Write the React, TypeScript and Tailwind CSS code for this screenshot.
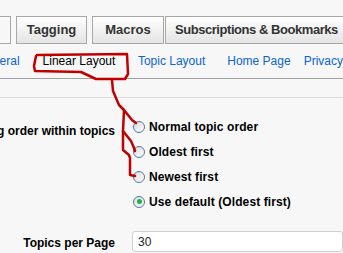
import React from "react";

const font = { fontFamily: '"Liberation Sans", Arial, sans-serif' };

function Radio({ checked }: { checked?: boolean }) {
  return (
    <span className="relative flex h-[12px] w-[12px] shrink-0 items-center justify-center rounded-full border border-[#4f7aa8] bg-gradient-to-br from-[#d9d9d9] to-[#ffffff]">
      {checked && <span className="h-[5px] w-[5px] rounded-full bg-[#22b14c]" />}
    </span>
  );
}

function Tab({ label, className = "" }: { label: string; className?: string }) {
  return (
    <div
      className={`flex h-[28px] items-center justify-center border border-[#a8a8a8] bg-gradient-to-b from-[#ffffff] to-[#e4e4e4] text-[13px] font-bold text-[#333333] ${className}`}
    >
      {label}
    </div>
  );
}

export default function App() {
  return (
    <div className="relative h-[253px] w-[343px] overflow-hidden bg-[#f7f7f7]" style={font}>
      {/* Tab row */}
      <div className="flex h-[44px] items-end whitespace-nowrap">
        <div className="ml-[-2px] h-[28px] w-[13px] shrink-0 border border-[#a8a8a8] bg-[#f7f7f7]" />
        <Tab label="Tagging" className="ml-[5px] w-[71px] shrink-0" />
        <Tab label="Macros" className="ml-[5px] w-[72px] shrink-0" />
        <Tab
          label="Subscriptions & Bookmarks"
          className="ml-[1px] w-[190px] shrink-0 justify-start pl-[9px] tracking-[-0.45px]"
        />
      </div>

      {/* Sub tabs */}
      <div className="flex h-[35px] items-center whitespace-nowrap border-b border-[#a0a0a0] pb-[1px] text-[12px] text-[#0a64d6]">
        <span className="ml-[-33px] w-[53px] text-right">General</span>
        <span className="ml-[23px] w-[96px] text-black">Linear Layout</span>
        <span className="w-[90px]">Topic Layout</span>
        <span className="w-[77px]">Home Page</span>
        <span>Privacy</span>
      </div>

      <div className="h-[19px] border-b border-[#dddddd]" />

      {/* Content */}
      <div className="grid grid-cols-[115px_1fr] gap-x-[18px] pt-[16px] text-[12px] font-bold text-black">
        <div className="flex h-[25px] items-center justify-end overflow-visible whitespace-nowrap pt-[8px]">
          Sorting order within topics
        </div>
        <div className="flex flex-col">
          {[
            "Normal topic order",
            "Oldest first",
            "Newest first",
            "Use default (Oldest first)",
          ].map((t, i) => (
            <div key={t} className="flex h-[25px] items-center gap-[4px] whitespace-nowrap">
              <Radio checked={i === 3} />
              <span className="tracking-[0.1px]">{t}</span>
            </div>
          ))}
        </div>

        <div className="mt-[18px] flex h-[20px] items-center justify-end whitespace-nowrap pt-[2px]">
          Topics per Page
        </div>
        <div className="mt-[17px] ml-[-1px] flex h-[21px] items-center rounded-[3px] border border-[#cfcfcf] bg-white pl-[5px] text-[12px] font-normal text-[#222]">
          30
        </div>
      </div>

      {/* Red annotation */}
      <svg
        className="pointer-events-none absolute left-0 top-0"
        width={343}
        height={253}
        fill="none"
        stroke="#c00000"
        strokeWidth={2.5}
        strokeLinejoin="round"
        strokeLinecap="round"
      >
        <path d="M37 55 L127 54 L128 74 L125 79 L96 79 L81 72 L35 71 L34 66 L36 56" />
        <path d="M112 80 L113 91 L119 105 L124 110 L132 120 L136 123" />
        <path d="M124 110 L123 131 L131 141 L134 148 L135 151" />
        <path d="M123 131 L123 150 L129 155 L130 158 L130 175 L135 176" />
      </svg>
    </div>
  );
}
